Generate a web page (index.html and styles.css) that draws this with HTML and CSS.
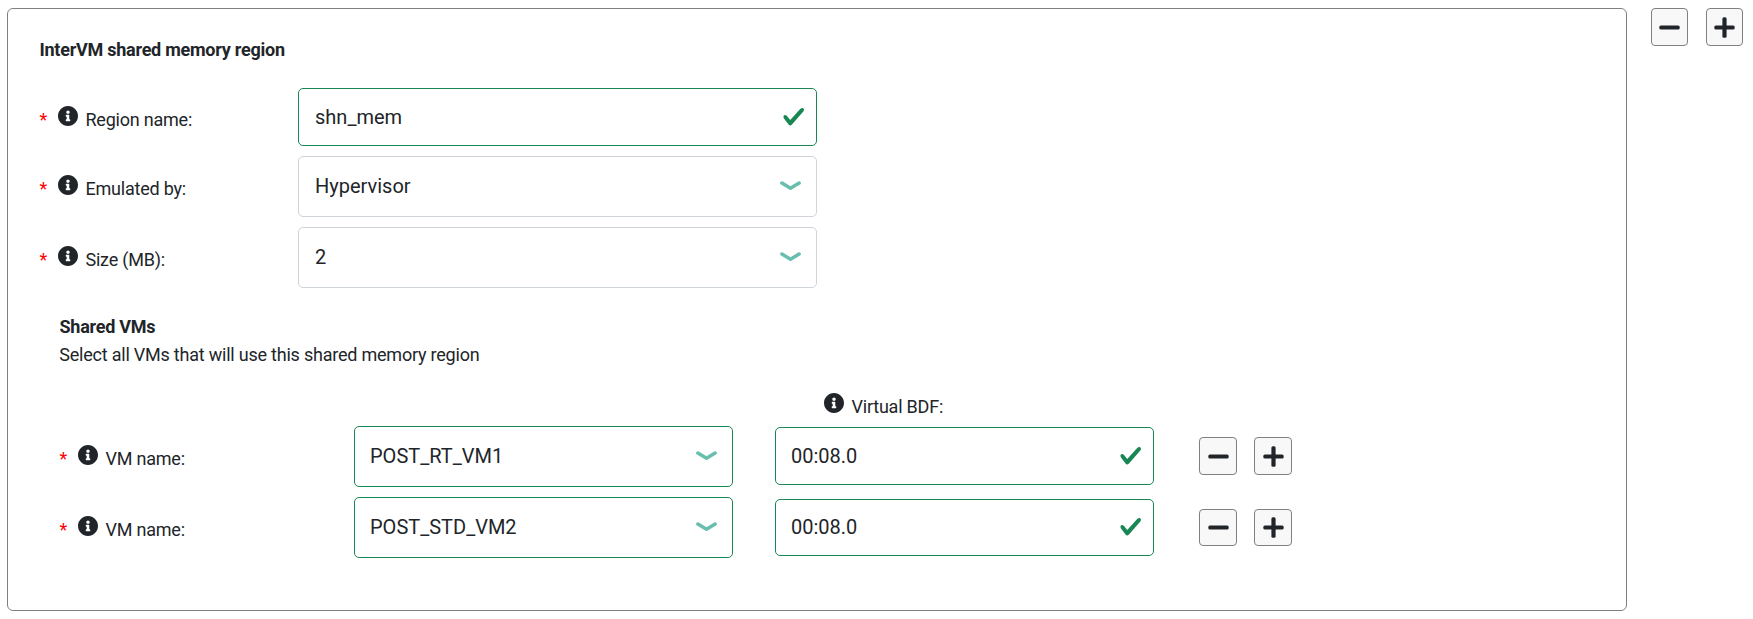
FILE: index.html
```html
<!DOCTYPE html>
<html lang="en">
<head>
<meta charset="utf-8">
<title>InterVM shared memory region</title>
<link rel="stylesheet" href="styles.css">
</head>
<body>
<svg class="defs" aria-hidden="true">
  <symbol id="info" viewBox="8 8 496 496"><path d="M256 8C119.043 8 8 119.083 8 256c0 136.997 111.043 248 248 248s248-111.003 248-248C504 119.083 392.957 8 256 8zm0 110c23.196 0 42 18.804 42 42s-18.804 42-42 42-42-18.804-42-42 18.804-42 42-42zm56 254c0 6.627-5.373 12-12 12h-88c-6.627 0-12-5.373-12-12v-24c0-6.627 5.373-12 12-12h12v-64h-12c-6.627 0-12-5.373-12-12v-24c0-6.627 5.373-12 12-12h64c6.627 0 12 5.373 12 12v100h12c6.627 0 12 5.373 12 12v24z"/></symbol>
  <symbol id="check" viewBox="0 0 8 8"><path d="M2.3 6.73L.6 4.53c-.4-1.04.46-1.4 1.1-.8l1.1 1.4 3.4-3.8c.6-.63 1.6-.27 1.2.7l-4 4.6c-.43.5-.8.4-1.1.1z"/></symbol>
  <symbol id="chevron" viewBox="0 0 21 10"><path d="M1.9 2 10.5 7.3 19.1 2"/></symbol>
  <symbol id="minus" viewBox="0 0 21 21"><rect x=".3" y="8.4" width="20.4" height="4.2" rx="1.5"/></symbol>
  <symbol id="plus" viewBox="0 0 21 21"><rect x=".3" y="8.4" width="20.4" height="4.2" rx="1.5"/><rect x="8.4" y=".3" width="4.2" height="20.4" rx="1.5"/></symbol>
</svg>
<main class="page">
  <section class="panel">
    <h2 class="title">InterVM shared memory region</h2>
    <div class="fields">
      <div class="row">
        <label class="label input-label"><span class="star">*</span><svg class="info"><use href="#info"/></svg>Region name:</label>
        <div class="control input valid">shn_mem<svg class="check"><use href="#check"/></svg></div>
      </div>
      <div class="row">
        <label class="label"><span class="star">*</span><svg class="info"><use href="#info"/></svg>Emulated by:</label>
        <div class="control">Hypervisor<svg class="chevron"><use href="#chevron"/></svg></div>
      </div>
      <div class="row">
        <label class="label"><span class="star">*</span><svg class="info"><use href="#info"/></svg>Size (MB):</label>
        <div class="control">2<svg class="chevron"><use href="#chevron"/></svg></div>
      </div>
    </div>
    <div class="shared">
      <h3 class="subtitle">Shared VMs</h3>
      <p class="hint">Select all VMs that will use this shared memory region</p>
      <div class="label bdf-label"><svg class="info"><use href="#info"/></svg>Virtual BDF:</div>
      <div class="vm-row">
        <label class="label"><span class="star">*</span><svg class="info"><use href="#info"/></svg>VM name:</label>
        <div class="control valid">POST_RT_VM1<svg class="chevron"><use href="#chevron"/></svg></div>
        <div class="control input valid bdf">00:08.0<svg class="check"><use href="#check"/></svg></div>
        <div class="actions">
          <button class="btn"><svg class="sign"><use href="#minus"/></svg></button>
          <button class="btn"><svg class="sign"><use href="#plus"/></svg></button>
        </div>
      </div>
      <div class="vm-row last">
        <label class="label"><span class="star">*</span><svg class="info"><use href="#info"/></svg>VM name:</label>
        <div class="control valid">POST_STD_VM2<svg class="chevron"><use href="#chevron"/></svg></div>
        <div class="control input valid bdf">00:08.0<svg class="check"><use href="#check"/></svg></div>
        <div class="actions">
          <button class="btn"><svg class="sign"><use href="#minus"/></svg></button>
          <button class="btn"><svg class="sign"><use href="#plus"/></svg></button>
        </div>
      </div>
    </div>
  </section>
  <div class="region-actions">
    <button class="btn"><svg class="sign"><use href="#minus"/></svg></button>
    <button class="btn"><svg class="sign"><use href="#plus"/></svg></button>
  </div>
</main>
</body>
</html>
```
FILE: styles.css
```css
* { box-sizing: border-box; }
body { margin: 0; background: #fff; color: #212529; font: 18px/27px Roboto, sans-serif; letter-spacing: -.22px; }
h2, h3, p { margin: 0; font-size: 18px; }
.defs { position: absolute; width: 0; height: 0; }
svg { display: block; flex: none; fill: currentColor; }
.page { display: flex; align-items: flex-start; padding: 8px 0 0 7px; }
.panel { width: 1620px; height: 603px; padding: 27px 0 0 31px; border: 1px solid #808080; border-radius: 6px; }
.title, .subtitle { padding-left: .5px; font-weight: 700; letter-spacing: -.25px; }
.fields { display: grid; gap: 10px; margin-top: 25px; }
.row { display: grid; grid-template-columns: 259px 519px; align-items: start; }
.label { display: flex; margin-top: 19px; white-space: nowrap; }
.input-label { margin-top: 18px; }
.star { width: 19px; padding-left: .5px; color: #f00; }
.info { width: 20px; height: 20px; margin-right: 7.5px; }
.control { display: flex; align-items: center; justify-content: space-between; height: 61px; padding: 0 15px 1px 16px; border: 1px solid #ced4da; border-radius: 5px; font-size: 20px; line-height: 30px; letter-spacing: 0; }
.input { height: 58px; padding-right: 11px; padding-bottom: 0; }
.valid { border-color: #198754; }
.check { width: 23.5px; height: 23.5px; color: #198754; }
.chevron { width: 21px; height: 10px; fill: none; stroke: #69beaf; stroke-width: 3.5; stroke-linecap: round; stroke-linejoin: round; }
.shared { padding: 25px 0 0 20px; }
.hint { margin-top: 1px; padding-left: .3px; }
.bdf-label { margin: 25px 0 0 765px; }
.vm-row { display: grid; grid-template-columns: 295px 379px 379px auto; align-items: start; margin-top: 6px; }
.vm-row .control { padding-left: 15px; }
.vm-row.last { margin-top: 10px; }
.vm-row .bdf { margin: 1px -42px 0 42px; }
.last .bdf { height: 57px; }
.vm-row.last .bdf { margin-top: 2px; padding-bottom: 1px; }
.actions { display: flex; gap: 17px; margin: 11px 0 0 87px; }
.last .actions { margin-top: 12px; }
.btn { display: flex; align-items: center; justify-content: center; width: 38px; height: 38px; padding: 0; border: 1px solid #808080; border-radius: 4px; background: #f8f8f8; color: #212529; }
.last .btn { height: 37px; }
.region-actions { display: flex; gap: 18px; margin-left: 24px; }
.region-actions .btn { width: 37px; }
.sign { width: 21px; height: 21px; }
```
